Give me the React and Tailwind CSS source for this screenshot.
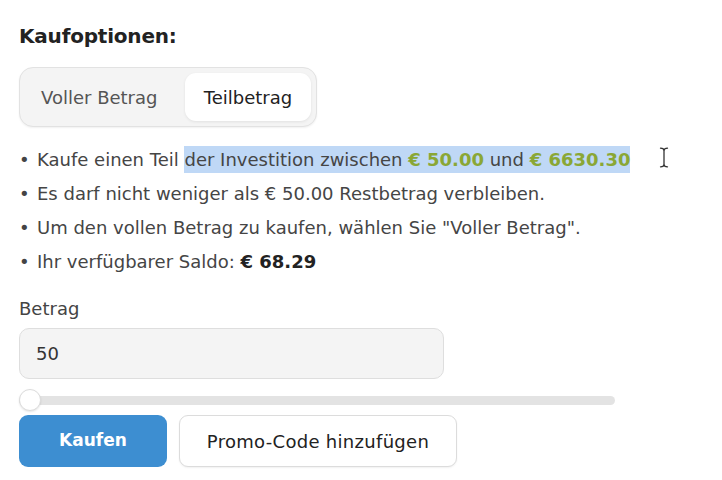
export default function App() {
  return (
    <div className="w-[722px] h-[480px] bg-white overflow-hidden font-['DejaVu_Sans',sans-serif] text-[#454545]">
      <div className="pl-[19px] pt-[23px] flex flex-col relative">
        <h2 className="text-[20px] leading-[26px] font-bold text-[#222] tracking-[-0.2px]">Kaufoptionen:</h2>
        <div className="mt-[18px] w-[298px] h-[60px] rounded-[14px] border border-[#e2e2e2] bg-[#f4f4f4] flex items-center pl-[21px] pr-[5px] shadow-[0_1px_2px_rgba(0,0,0,0.06)]">
          <div className="flex-1 text-[18px] text-[#555]">Voller Betrag</div>
          <div className="w-[126px] h-[48px] rounded-[11px] bg-white flex items-center justify-center text-[18px] text-[#222] shadow-[0_1px_3px_rgba(0,0,0,0.08)]">Teilbetrag</div>
        </div>
        <ul className="mt-[16px] text-[18px] leading-[34px]">
          <li className="flex items-center">
            <span className="w-[18px] text-[#444]">•</span>
            <span>Kaufe einen Teil <span className="bg-[#bfd8f6] py-[3px]">der Investition zwischen <span className="text-[#8aa735] font-bold">€ 50.00</span> und <span className="text-[#8aa735] font-bold">€ 6630.30</span></span></span>
          </li>
          <li className="flex items-center">
            <span className="w-[18px] text-[#444]">•</span>
            <span>Es darf nicht weniger als € 50.00 Restbetrag verbleiben.</span>
          </li>
          <li className="flex items-center">
            <span className="w-[18px] text-[#444]">•</span>
            <span>Um den vollen Betrag zu kaufen, wählen Sie "Voller Betrag".</span>
          </li>
          <li className="flex items-center">
            <span className="w-[18px] text-[#444]">•</span>
            <span>Ihr verfügbarer Saldo: <span className="font-bold text-[#222]">€ 68.29</span></span>
          </li>
        </ul>
        <svg className="absolute left-[659px] top-[147px]" width="10" height="21" viewBox="0 0 10 21" fill="none" stroke="#333" strokeWidth="1.3" strokeLinecap="round">
          <path d="M1.5 1.2 Q5 1.2 5 3.5 Q5 1.2 8.5 1.2" />
          <path d="M5 3.5 V17.5" />
          <path d="M1.5 19.8 Q5 19.8 5 17.5 Q5 19.8 8.5 19.8" />
        </svg>
        <label className="mt-[19px] text-[18px] leading-[22px] text-[#444]">Betrag</label>
        <div className="mt-[8px] w-[425px] h-[51px] rounded-[10px] border border-[#dedede] bg-[#f4f4f4] flex items-center pl-[16px] text-[18px] text-[#333]">50</div>
        <div className="mt-[10px] w-[596px] h-[22px] relative flex items-center">
          <div className="w-full h-[9px] rounded-full bg-[#e3e3e3]"></div>
          <div className="absolute left-0 top-0 w-[22px] h-[22px] rounded-full bg-white border border-[#dcdcdc] shadow-[0_1px_2px_rgba(0,0,0,0.1)]"></div>
        </div>
        <div className="mt-[4px] flex gap-[12px]">
          <button className="w-[148px] h-[52px] rounded-[9px] bg-[#3d8ed1] text-white text-[17px] font-bold">Kaufen</button>
          <button className="w-[278px] h-[52px] rounded-[9px] bg-white border border-[#dcdcdc] text-[#222] text-[18px] tracking-[0.3px] shadow-[0_1px_2px_rgba(0,0,0,0.06)]">Promo-Code hinzufügen</button>
        </div>
      </div>
    </div>
  );
}
